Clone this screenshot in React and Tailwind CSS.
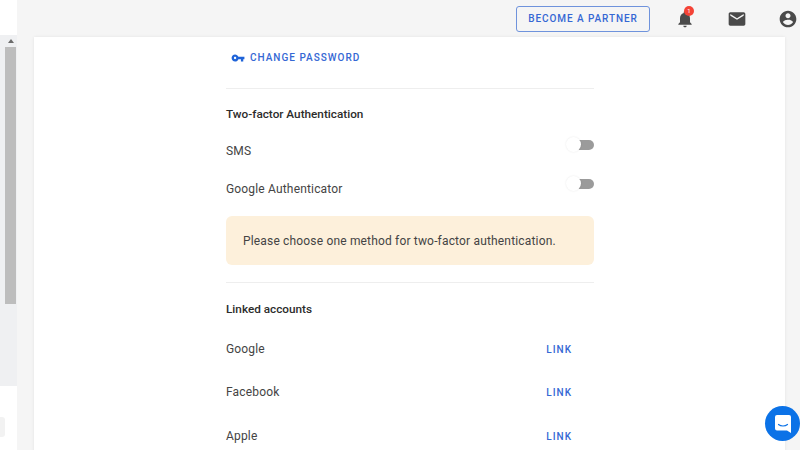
import React from "react";

const Icon = ({ d, size = 20, className = "" }) => (
  <svg width={size} height={size} viewBox="0 0 24 24" fill="#4a4a4a" className={className}>
    <path d={d} />
  </svg>
);

const Toggle = () => (
  <div className="relative h-[10px] w-[28px]">
    <div className="ml-[7px] h-[10px] w-[21px] rounded-full bg-[#9b9b9b]" />
    <div className="absolute left-0 top-[-3px] h-[15px] w-[15px] rounded-full bg-white shadow-[0_0_2px_rgba(0,0,0,0.1)]" />
  </div>
);

const LinkRow = ({ name, h }) => (
  <div className={`flex items-center justify-between ${h}`}>
    <span className="pt-[1px] text-[12px] tracking-[0.17px] text-[#444444]">{name}</span>
    <span className="mr-[22px] mt-[2px] text-[10px] font-medium tracking-[1px] text-[#3568d4]">LINK</span>
  </div>
);

export default function App() {
  return (
    <div className="relative flex h-[450px] w-[800px] overflow-hidden bg-[#f5f5f5] font-['Roboto',sans-serif]">
      {/* sidebar edge with its scrollbar */}
      <div className="flex w-[17px] shrink-0 flex-col bg-white">
        <div className="h-[35px]" />
        <div className="flex h-[351px] flex-col bg-[#eff0f2] pl-[5px] pr-[1px]">
          <div className="flex h-[12px] items-center justify-center">
            <div className="h-0 w-0 border-x-[3px] border-b-[4px] border-x-transparent border-b-[#6b6b6b]" />
          </div>
          <div className="h-[257px] bg-[#bdbdbd]" />
        </div>
        <div className="mt-[31px] h-[20px] w-[5px] rounded-r-[3px] bg-[#f2f2f2]" />
      </div>

      <div className="flex min-w-0 flex-1 flex-col">
        <header className="flex h-[37px] shrink-0 items-center bg-[#f5f5f5] pl-[499px]">
          <div className="flex h-[26px] w-[134px] items-center justify-center rounded-[3px] border border-[#6f93dc] text-[10px] font-medium tracking-[0.93px] text-[#3568d4]">
            BECOME A PARTNER
          </div>
          <div className="relative ml-[25px] h-[20px]">
            <Icon d="M12 22c1.1 0 2-.9 2-2h-4c0 1.1.89 2 2 2zm6-6v-5c0-3.07-1.64-5.64-4.5-6.32V4c0-.83-.67-1.5-1.5-1.5s-1.5.67-1.5 1.5v.68C7.63 5.36 6 7.92 6 11v5l-2 2v1h16v-1l-2-2z" />
            <div className="absolute left-[9px] top-[-3px] flex h-[10px] w-[10px] items-center justify-center rounded-full bg-[#f44336] text-[6px] text-white">
              1
            </div>
          </div>
          <Icon className="ml-[32px]" d="M20 4H4c-1.1 0-1.99.9-1.99 2L2 18c0 1.1.9 2 2 2h16c1.1 0 2-.9 2-2V6c0-1.1-.9-2-2-2zm0 4l-8 5-8-5V6l8 5 8-5v2z" />
          <Icon className="ml-[31px]" d="M12 2C6.48 2 2 6.48 2 12s4.48 10 10 10 10-4.48 10-10S17.52 2 12 2zm0 3c1.66 0 3 1.34 3 3s-1.34 3-3 3-3-1.34-3-3 1.34-3 3-3zm0 14.2c-2.5 0-4.71-1.28-6-3.22.03-1.99 4-3.08 6-3.08 1.99 0 5.97 1.09 6 3.08-1.29 1.94-3.5 3.22-6 3.22z" />
        </header>

        <main className="ml-[17px] mr-[15px] flex-1 bg-white pl-[192px] pr-[191px] shadow-[0_0_3px_rgba(0,0,0,0.08)]">
          <div className="w-[368px]">
            <div className="flex h-[40px] items-center pl-[5px] pt-[1px] text-[10px] font-medium tracking-[1px] text-[#3568d4]">
              <svg width="14" height="14" viewBox="0 0 24 24" className="mr-[5px]" fill="#1f63d8">
                <path d="M12.65 10C11.83 7.67 9.61 6 7 6c-3.31 0-6 2.69-6 6s2.69 6 6 6c2.61 0 4.83-1.67 5.65-4H17v4h4v-4h2v-4H12.65zM7 14c-1.1 0-2-.9-2-2s.9-2 2-2 2 .9 2 2-.9 2-2 2z" />
              </svg>
              CHANGE PASSWORD
            </div>
            <div className="mt-[11px] border-t border-[#eeeeee]" />
            <h2 className="mt-[17px] text-[11.75px] font-medium leading-[16px] text-[#2c2c2c]">
              Two-factor Authentication
            </h2>
            <div className="mt-[11px] flex h-[34px] items-center justify-between text-[12px] tracking-[0.17px] text-[#444444]">
              <span className="pt-[1px]">SMS</span>
              <div className="mb-[11px]"><Toggle /></div>
            </div>
            <div className="mt-[5px] flex h-[34px] items-center justify-between text-[12px] tracking-[0.17px] text-[#444444]">
              <span>Google Authenticator</span>
              <div className="mb-[11px]"><Toggle /></div>
            </div>
            <div className="mt-[10px] flex h-[49px] items-center rounded-[6px] bg-[#fdf0db] pl-[17px] text-[12px] tracking-[0.17px] text-[#444444]">
              Please choose one method for two-factor authentication.
            </div>
            <div className="mt-[17px] border-t border-[#eeeeee]" />
            <h2 className="mt-[18px] text-[11.75px] font-medium leading-[16px] text-[#2c2c2c]">
              Linked accounts
            </h2>
            <div className="mt-[9px]">
              <LinkRow name="Google" h="h-[44px]" />
              <LinkRow name="Facebook" h="h-[43px]" />
              <LinkRow name="Apple" h="h-[44px]" />
            </div>
          </div>
        </main>
      </div>

      {/* chat launcher */}
      <div className="absolute left-[765px] top-[406px] flex h-[35px] w-[35px] items-center justify-center rounded-full bg-[#0b72e7]">
        <svg width="16" height="18" viewBox="0 0 16 18" fill="none">
          <path d="M2 0h12a2 2 0 0 1 2 2v16l-4-2.5H2a2 2 0 0 1-2-2V2a2 2 0 0 1 2-2z" fill="white" />
          <path d="M3.5 9.5c2.5 2 6.5 2 9 0" stroke="#0b72e7" strokeWidth="1.2" strokeLinecap="round" />
        </svg>
      </div>
    </div>
  );
}
